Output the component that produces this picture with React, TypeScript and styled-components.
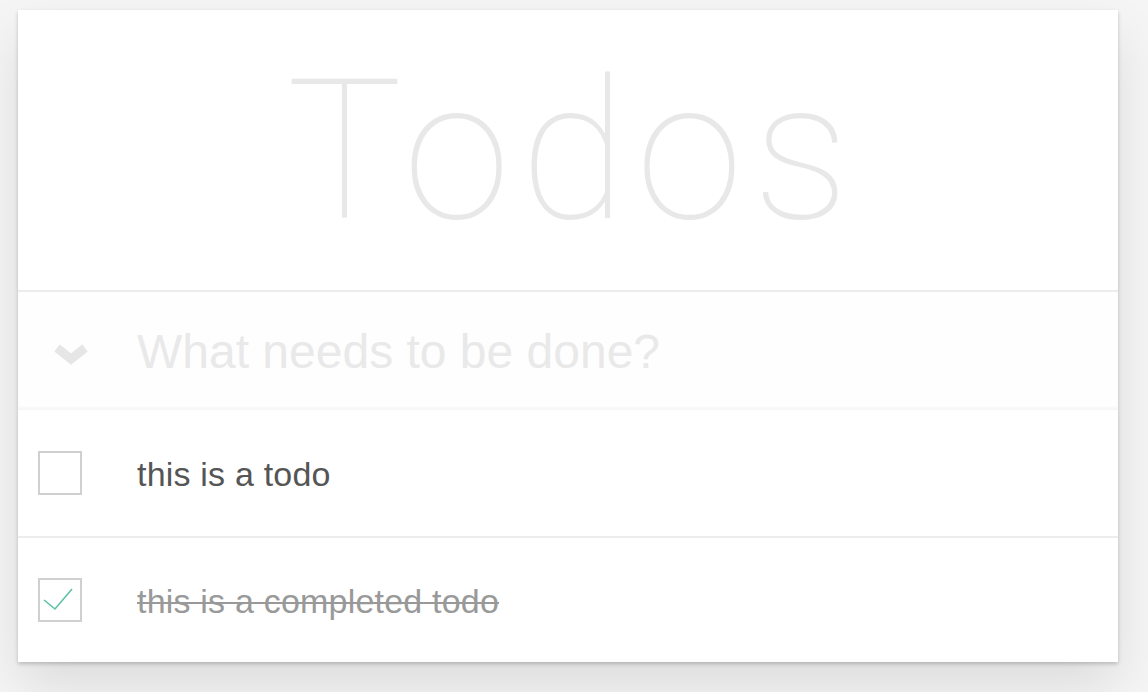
import styled, { createGlobalStyle } from 'styled-components';

const GlobalStyle = createGlobalStyle`
	body {
		margin: 0;
		background: #f5f5f5;
		font-family: 'Liberation Sans', Arial, sans-serif;
		-webkit-font-smoothing: antialiased;
	}
`;

const Page = styled.div`
	padding: 10px 0 30px 18px;
`;

const Card = styled.section`
	width: 1100px;
	background: #fff;
	box-shadow: 0 2px 4px 0 rgba(0, 0, 0, 0.2), 0 25px 50px 0 rgba(0, 0, 0, 0.1);
`;

const Header = styled.header`
	height: 280px;
	display: flex;
	align-items: center;
	justify-content: center;
	border-bottom: 2px solid #ededed;
`;

const Title = styled.h1`
	margin: 0;
	font-family: Roboto, 'Liberation Sans', sans-serif;
	font-weight: 100;
	font-size: 194px;
	letter-spacing: 10px;
	line-height: 1;
	color: #e8e8e8;
	transform: translate(5px, 2px);
`;

const NewTodoRow = styled.div`
	height: 118px;
	display: flex;
	align-items: center;
	background: rgba(0, 0, 0, 0.003);
	box-shadow: inset 0 -3px 2px rgba(0, 0, 0, 0.03);
`;

const ToggleAll = styled.div`
	width: 119px;
	display: flex;
	justify-content: center;
	padding-right: 14px;
	padding-top: 10px;
	box-sizing: border-box;
`;

const NewTodo = styled.input`
	flex: 1;
	border: none;
	outline: none;
	background: transparent;
	padding: 0;
	font-family: 'Liberation Sans', Arial, sans-serif;
	font-size: 48px;
	color: #4d4d4d;

	&::placeholder {
		color: #e9e9e9;
	}
`;

const List = styled.ul`
	margin: 0;
	padding: 0;
	list-style: none;
`;

const Item = styled.li<{ last?: boolean }>`
	height: ${({ last }) => (last ? 124 : 126)}px;
	display: flex;
	align-items: center;
	border-bottom: ${({ last }) => (last ? 'none' : '2px solid #ededed')};
`;

const Check = styled.span`
	width: 44px;
	height: 44px;
	margin-left: 20px;
	margin-right: 55px;
	box-sizing: border-box;
	border: 2px solid #d0d0d0;
	display: flex;
	flex-shrink: 0;
`;

const Label = styled.span<{ done?: boolean }>`
	font-family: 'Liberation Sans', Arial, sans-serif;
	font-size: 34px;
	letter-spacing: 0.2px;
	color: ${({ done }) => (done ? '#999' : '#555')};
	text-decoration: ${({ done }) => (done ? 'line-through' : 'none')};
	text-decoration-thickness: 2px;
	padding-top: 2px;
`;

const todos = [
	{ title: 'this is a todo', completed: false },
	{ title: 'this is a completed todo', completed: true },
];

export default function App() {
	return (
		<Page>
			<GlobalStyle />
			<Card>
				<Header>
					<Title>Todos</Title>
				</Header>
				<NewTodoRow>
					<ToggleAll>
						<svg width="34" height="24" viewBox="0 0 34 24">
							<path d="M3 4 L17 15 L31 4" fill="none" stroke="#e6e6e6" strokeWidth="9" strokeLinejoin="miter" />
						</svg>
					</ToggleAll>
					<NewTodo placeholder="What needs to be done?" />
				</NewTodoRow>
				<List>
					{todos.map((todo, i) => (
						<Item key={todo.title} last={i === todos.length - 1}>
							<Check>
								{todo.completed && (
									<svg width="40" height="40" viewBox="0 0 40 40">
										<path d="M4 20 L15 29 L32 9" fill="none" stroke="#5dc2a6" strokeWidth="1.6" />
									</svg>
								)}
							</Check>
							<Label done={todo.completed}>{todo.title}</Label>
						</Item>
					))}
				</List>
			</Card>
		</Page>
	);
}
